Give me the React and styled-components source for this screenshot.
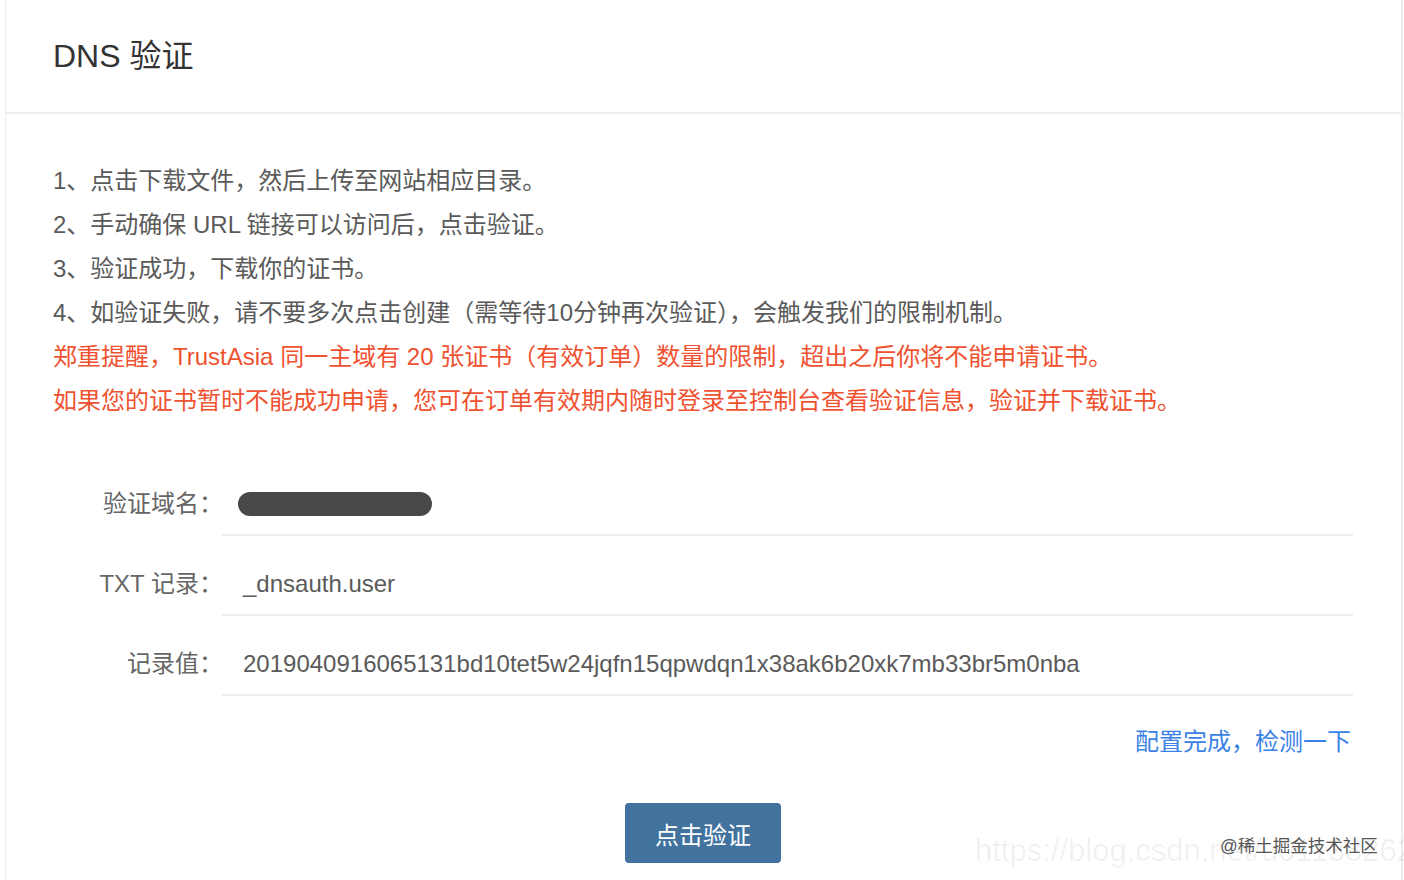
import React from "react";
import styled, { createGlobalStyle } from "styled-components";

const Global = createGlobalStyle`
  html, body { margin: 0; padding: 0; background: #fff; height: 100%; overflow: hidden; }
  body { font-family: "Liberation Sans", "Noto Sans CJK SC", sans-serif; }
`;

const Page = styled.div`
  position: relative;
  height: 880px;
  overflow: hidden;
  padding-left: 5px;
  padding-right: 1px;
`;

const Card = styled.div`
  border-left: 1px solid #ececec;
  border-right: 2px solid #ececec;
  min-height: 880px;
  box-sizing: border-box;
`;

const Header = styled.div`
  height: 114px;
  box-sizing: border-box;
  border-bottom: 2px solid #eeeeee;
  display: flex;
  align-items: center;
  padding-left: 47px;
  padding-bottom: 6px;
`;

const Title = styled.h1`
  margin: 0;
  font-size: 32px;
  font-weight: normal;
  color: #333;
`;

const Body = styled.div`
  padding: 45px 48px 0 47px;
`;

const Line = styled.p`
  margin: 0;
  font-size: 24px;
  line-height: 44px;
  color: ${(p) => (p.$warn ? "#ef5230" : "#5a5a5a")};
  white-space: nowrap;
`;

const Form = styled.div`
  margin-top: 33px;
`;

const Row = styled.div`
  display: flex;
  align-items: stretch;
`;

const Label = styled.div`
  width: 170px;
  flex: none;
  text-align: right;
  font-size: 24px;
  line-height: 32px;
  padding-top: 32px;
  color: #666;
  white-space: nowrap;
  margin-right: -1px;
`;

const Field = styled.div`
  flex: 1;
  height: 32px;
  border-bottom: 2px solid #ededed;
  padding: 32px 0 14px 21px;
  font-size: 24px;
  line-height: 32px;
  color: #5a5a5a;
  white-space: nowrap;
  display: flex;
  align-items: center;
`;

const Redacted = styled.span`
  display: inline-block;
  width: 194px;
  height: 24px;
  border-radius: 12px;
  background: #484848;
  margin-left: -5px;
`;

const LinkRow = styled.div`
  display: flex;
  justify-content: flex-end;
  margin-top: 30px;
  padding-right: 2px;
`;

const CheckLink = styled.a`
  font-size: 24px;
  line-height: 32px;
  color: #3b82e6;
  text-decoration: none;
  cursor: pointer;
`;

const ButtonRow = styled.div`
  display: flex;
  justify-content: center;
  margin-top: 45px;
`;

const VerifyButton = styled.button`
  width: 156px;
  height: 60px;
  border: none;
  border-radius: 4px;
  background: #41739e;
  color: #fff;
  font-family: "Liberation Sans", "Noto Sans CJK SC", sans-serif;
  font-size: 24px;
  cursor: pointer;
`;

const Watermark = styled.div`
  position: absolute;
  left: 975px;
  top: 833px;
  font-size: 31px;
  color: rgba(0, 0, 0, 0.06);
  white-space: nowrap;
  pointer-events: none;
`;

const Credit = styled.div`
  position: absolute;
  left: 1220px;
  top: 832px;
  font-size: 17.5px;
  color: #555;
  white-space: nowrap;
  pointer-events: none;
`;

export default function App() {
  return (
    <Page>
      <Global />
      <Card>
        <Header>
          <Title>DNS 验证</Title>
        </Header>
        <Body>
          <Line>1、点击下载文件，然后上传至网站相应目录。</Line>
          <Line>2、手动确保 URL 链接可以访问后，点击验证。</Line>
          <Line>3、验证成功，下载你的证书。</Line>
          <Line>4、如验证失败，请不要多次点击创建（需等待10分钟再次验证），会触发我们的限制机制。</Line>
          <Line $warn>郑重提醒，TrustAsia 同一主域有 20 张证书（有效订单）数量的限制，超出之后你将不能申请证书。</Line>
          <Line $warn>如果您的证书暂时不能成功申请，您可在订单有效期内随时登录至控制台查看验证信息，验证并下载证书。</Line>
          <Form>
            <Row>
              <Label>验证域名：</Label>
              <Field>
                <Redacted />
              </Field>
            </Row>
            <Row>
              <Label>TXT 记录：</Label>
              <Field>_dnsauth.user</Field>
            </Row>
            <Row>
              <Label>记录值：</Label>
              <Field>2019040916065131bd10tet5w24jqfn15qpwdqn1x38ak6b20xk7mb33br5m0nba</Field>
            </Row>
          </Form>
          <LinkRow>
            <CheckLink>配置完成，检测一下</CheckLink>
          </LinkRow>
          <ButtonRow>
            <VerifyButton>点击验证</VerifyButton>
          </ButtonRow>
        </Body>
      </Card>
      <Watermark>https://blog.csdn.net/u011382626</Watermark>
      <Credit>@稀土掘金技术社区</Credit>
    </Page>
  );
}
